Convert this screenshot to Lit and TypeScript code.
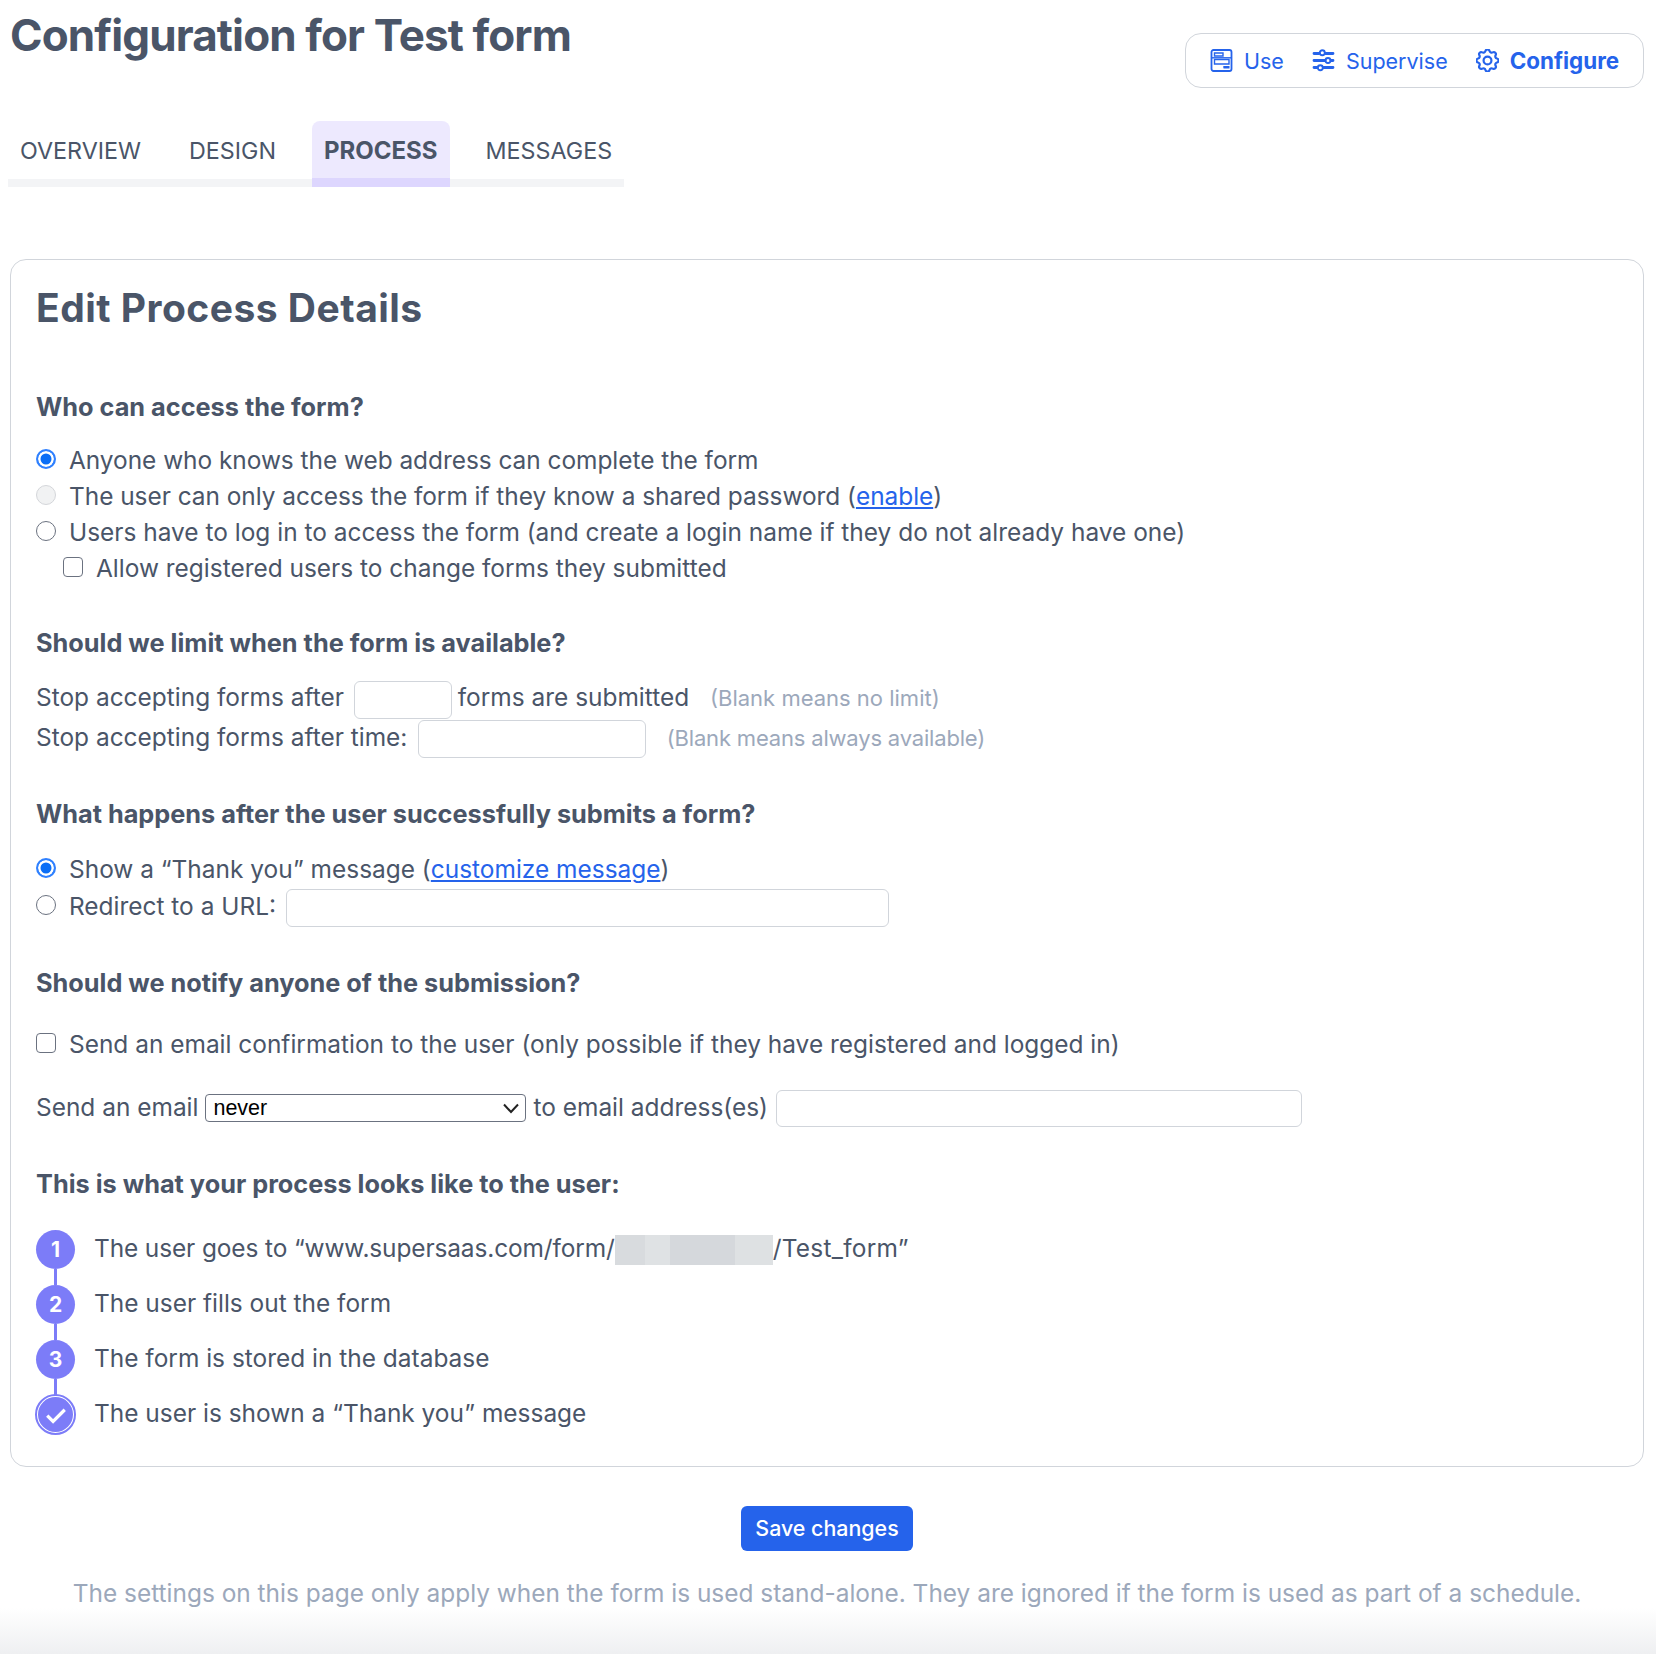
import { LitElement, html, css, svg } from "lit";
import { customElement } from "lit/decorators.js";

const useIcon = svg`<rect x="1" y="1" width="20" height="21" rx="2" fill="none" stroke="currentColor" stroke-width="1.8"/><path d="M4 4h8.500v3H4zM4 10.500h14.500v4.500H4zM13 18h5.500" fill="none" stroke="currentColor" stroke-width="1.400"/><path d="M1 8.800h20" stroke="currentColor" stroke-width="1.400"/><path d="M13 17h6v2.500h-6z" fill="currentColor"/>`;
const superviseIcon = svg`<g fill="none" stroke="currentColor" stroke-width="2.800" stroke-linecap="round"><path d="M1.500 4.500h5M13 4.500h7.500M1.500 11.500h11M18.500 11.500h2M1.500 18.500h3M11 18.500h9.500"/></g><g fill="none" stroke="currentColor" stroke-width="1.900"><circle cx="9.800" cy="3.800" r="2.500"/><circle cx="15.500" cy="11.500" r="2.500"/><circle cx="7.800" cy="18.800" r="2.500"/></g>`;
const gearIcon = svg`<g fill="none" stroke="currentColor" stroke-width="1.800" stroke-linejoin="round"><path d="M10.325 4.317c.426-1.756 2.924-1.756 3.350 0a1.724 1.724 0 002.573 1.066c1.543-.94 3.310.826 2.370 2.370a1.724 1.724 0 001.065 2.572c1.756.426 1.756 2.924 0 3.350a1.724 1.724 0 00-1.066 2.573c.94 1.543-.826 3.310-2.370 2.370a1.724 1.724 0 00-2.572 1.065c-.426 1.756-2.924 1.756-3.350 0a1.724 1.724 0 00-2.573-1.066c-1.543.94-3.310-.826-2.370-2.370a1.724 1.724 0 00-1.065-2.572c-1.756-.426-1.756-2.924 0-3.350a1.724 1.724 0 001.066-2.573c-.94-1.543.826-3.310 2.370-2.370.996.608 2.296.07 2.572-1.065z"/><circle cx="12" cy="12" r="3.200"/></g>`;

@customElement("app-root")
export class AppRoot extends LitElement {
  static styles = css`
    :host {
      display: block;
      width: 1656px;
      height: 1654px;
      position: relative;
      overflow: hidden;
      background: #fff;
      color: #4a5568;
      font-family: Inter, "Liberation Sans", sans-serif;
      font-size: 24.450px;
      line-height: 36px;
    }
    * { box-sizing: border-box; }
    .top { display: flex; justify-content: space-between; align-items: flex-start; padding: 0 12px 0 10px; height: 121px; }
    h1 { margin: 10px 0 0; font-size: 44px; line-height: 50px; font-weight: 700; letter-spacing: -0.880px; }
    .modes { margin-top: 33px; width: 459px; height: 55px; border: 1px solid #d1d5db; border-radius: 16px; display: flex; align-items: center; padding-left: 24px; color: #2563eb; font-size: 21.500px; }
    .mode { display: flex; align-items: center; gap: 11px; margin-right: 28px; }
    .mode svg { width: 23px; height: 23px; flex: none; }
    .mode.on { font-weight: 700; font-size: 22.400px; }
    .tabs { display: inline-flex; vertical-align: top; gap: 24px; margin-left: 8px; height: 66px; background: linear-gradient(#fff 0 58px, #f3f4f6 58px); }
    .tab { display: flex; align-items: center; justify-content: center; padding: 0 12px 6px; height: 66px; font-size: 23.300px; }
    .tab.on { font-weight: 700; font-size: 24px; background: linear-gradient(#ede9fe 0 57px, #ddd6fe 57px); border-radius: 8px 8px 0 0; }
    .tabs-line { height: 66px; }
    .card { position: relative; margin: 72px 12px 0 10px; height: 1208px; border: 1px solid #d1d5db; border-radius: 16px; padding: 0 25px; }
    h2 { margin: 0; padding-top: 25px; height: 96px; font-size: 39px; line-height: 46px; font-weight: 700; letter-spacing: 0.480px; }
    h3 { margin: 0; font-size: 25.300px; line-height: 36px; font-weight: 700; }
    .row { display: flex; align-items: center; white-space: pre; height: 36px; }
    .tight { letter-spacing: -0.040px; }
    .gap-radio { width: 20px; height: 20px; border-radius: 50%; border: 1.500px solid #6b7280; margin-right: 13px; flex: none; background: #fff; position: relative; top: -1px; }
    .gap-radio.sel { border: 2px solid #2f80ff; background: #0b6ef6; box-shadow: inset 0 0 0 2.500px #fff; }
    .gap-radio.dis { border-color: #d4d6da; background: #f1f2f3; }
    .check { width: 20px; height: 20px; border-radius: 4px; border: 1.500px solid #6b7280; margin-right: 13px; flex: none; background: #fff; position: relative; top: -1px; }
    .indent { padding-left: 27px; }
    a { color: #2563eb; text-decoration: underline; }
    .field { border: 1px solid #d1d5db; border-radius: 6px; height: 38px; background: #fff; flex: none; display: block; margin-top: 4px; margin-left: 3.500px; }
    .hint { color: #9ca8bb; font-size: 22px; margin-top: 2px; }
    .hint.long { letter-spacing: -0.180px; }
    .steps { display: flex; flex-direction: column; gap: 16px; }
    .step { display: flex; align-items: center; height: 39px; gap: 19px; position: relative; }
    .step-text { padding-bottom: 3px; }
    .pre { letter-spacing: -0.120px; }
    .suf { letter-spacing: 0.250px; }
    .dot { width: 39px; height: 39px; border-radius: 50%; background: #7c7cf8; color: #fff; font-size: 21px; font-weight: 700; display: flex; align-items: center; justify-content: center; flex: none; position: relative; }
    .dot.line::after { content: ""; position: absolute; left: 18px; top: 39px; width: 3px; height: 16px; background: #7c7cf8; }
    .dot.done { box-shadow: inset 0 0 0 2px #fff; outline: 2px solid #7c7cf8; outline-offset: -1px; }
    .dot.done svg { width: 28px; height: 28px; }
    .blur { display: inline-flex; height: 30px; width: 158px; vertical-align: middle; background: linear-gradient(90deg, #d8dbde 0 30px, #dfe2e4 30px 55px, #d5d8dc 55px 120px, #dee1e3 120px); }
    .sel-wrap { position: relative; width: 321px; height: 28px; flex: none; margin: 2px 7px 0 7px; }
    select { appearance: none; width: 100%; height: 100%; display: block; border: 1px solid #6b7280; border-radius: 4px; background: #fff; color: #000; font: 21.500px/26px "Liberation Sans", sans-serif; padding: 0 0 0 7px; margin: 0; }
    .sel-wrap svg { position: absolute; right: 6px; top: 8px; width: 18px; height: 12px; pointer-events: none; }
    .save-wrap { display: flex; justify-content: center; margin-top: 39px; margin-left: -2px; }
    button { width: 172px; height: 45px; border: 0; border-radius: 6px; background: #2563eb; color: #fff; font: 500 21.400px Inter, sans-serif; padding: 0 0 2px; }
    .foot { margin-top: 24px; height: 80px; text-align: center; color: #9ca8bb; font-size: 24.450px; line-height: 36px; padding: 0 2px 0 0; background: linear-gradient(#fff 0 33px, #eeeff1 100%); }
  `;

  private radio(kind = "") { return html`<span class="gap-radio ${kind}"></span>`; }

  render() {
    return html`
      <div class="top">
        <h1>Configuration for Test form</h1>
        <div class="modes">
          <div class="mode"><svg viewBox="0 0 22 23">${useIcon}</svg>Use</div>
          <div class="mode"><svg viewBox="0 0 22 23">${superviseIcon}</svg>Supervise</div>
          <div class="mode on"><svg viewBox="2.600 2.600 18.800 18.800">${gearIcon}</svg>Configure</div>
        </div>
      </div>
      <div class="tabs-line"><div class="tabs">
        <div class="tab">OVERVIEW</div>
        <div class="tab">DESIGN</div>
        <div class="tab on">PROCESS</div>
        <div class="tab">MESSAGES</div>
      </div></div>
      <div class="card">
        <h2>Edit Process Details</h2>
        <h3 style="margin-top:33px">Who can access the form?</h3>
        <div style="margin-top:17px">
          <div class="row tight">${this.radio("sel")}Anyone who knows the web address can complete the form</div>
          <div class="row tight">${this.radio("dis")}The user can only access the form if they know a shared password (<a href="#">enable</a>)</div>
          <div class="row">${this.radio()}Users have to log in to access the form (and create a login name if they do not already have one)</div>
          <div class="row indent"><span class="check"></span>Allow registered users to change forms they submitted</div>
        </div>
        <h3 style="margin-top:39px">Should we limit when the form is available?</h3>
        <div style="margin-top:17px">
          <div class="row" style="height:38px">Stop accepting forms after <span class="field" style="width:98px;margin:6px 6px 0 3px"></span>forms are submitted <span class="hint" style="margin-left:14px">(Blank means no limit)</span></div>
          <div class="row" style="height:41px">Stop accepting forms after time: <span class="field" style="width:228px;margin-right:21px"></span><span class="hint long">(Blank means always available)</span></div>
        </div>
        <h3 style="margin-top:39px">What happens after the user successfully submits a form?</h3>
        <div style="margin-top:19px">
          <div class="row">${this.radio("sel")}Show a “Thank you” message (<a href="#">customize message</a>)</div>
          <div class="row" style="margin-top:1px">${this.radio()}Redirect to a URL: <span class="field" style="width:603px"></span></div>
        </div>
        <h3 style="margin-top:41px">Should we notify anyone of the submission?</h3>
        <div class="row" style="margin-top:25px"><span class="check"></span>Send an email confirmation to the user (only possible if they have registered and logged in)</div>
        <div class="row" style="margin-top:27px">Send an email<span class="sel-wrap"><select><option>never</option></select><svg viewBox="0 0 18 12"><path d="M2 2.500l7 7.500 7-7.500" fill="none" stroke="#222" stroke-width="2"/></svg></span>to email address(es) <span class="field" style="width:526px;height:37px;margin-top:3px;margin-left:1.500px"></span></div>
        <h3 style="margin-top:41px">This is what your process looks like to the user:</h3>
        <div class="steps" style="margin-top:28px">
          <div class="step"><span class="dot line">1</span><span class="step-text"><span class="pre">The user goes to “www.supersaas.com/form/</span><span class="blur"></span><span class="suf">/Test_form”</span></span></div>
          <div class="step"><span class="dot line">2</span><span class="step-text">The user fills out the form</span></div>
          <div class="step"><span class="dot line">3</span><span class="step-text">The form is stored in the database</span></div>
          <div class="step"><span class="dot done"><svg viewBox="0 0 24 24"><path d="M4.500 12.500l5 5L19.500 7.500" fill="none" stroke="#fff" stroke-width="2.800"/></svg></span><span class="step-text">The user is shown a “Thank you” message</span></div>
        </div>
      </div>
      <div class="save-wrap"><button>Save changes</button></div>
      <div class="foot">The settings on this page only apply when the form is used stand-alone. They are ignored if the form is used as part of a schedule.</div>
    `;
  }
}
